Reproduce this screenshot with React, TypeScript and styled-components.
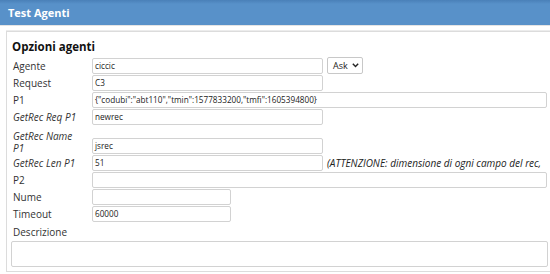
import React from "react";
import styled, { createGlobalStyle } from "styled-components";

const Global = createGlobalStyle`
  html, body { margin: 0; padding: 0; background: #fff; overflow: hidden; }
  body { font-family: "Open Sans", "DejaVu Sans", sans-serif; color: #333; }
`;

const Header = styled.div`
  height: 25px;
  background: linear-gradient(#4a80b8 0px, #5891c9 4px, #5891c9 100%);
  color: #fff;
  font-weight: bold;
  font-size: 11px;
  display: flex;
  align-items: center;
  padding-left: 8px;
  border-bottom: 1px solid #e4e4e4;
`;

const Page = styled.div`
  padding: 5px 0 0 6px;
  width: 600px;
`;

const Panel = styled.div`
  border: 1px solid #dcdcdc;
  box-shadow: 0 -1px 0 #ececec;
  background: #fff;
  padding: 7px 0 4px 4px;
`;

const Title = styled.div`
  font-weight: bold;
  font-size: 11.5px;
  color: #111;
  margin-bottom: 3px;
  padding-left: 1px;
`;

const Form = styled.div`
  display: grid;
  grid-template-columns: 81px auto;
  row-gap: 1px;
  align-items: center;
`;

const Label = styled.div<{ $italic?: boolean; $tall?: boolean }>`
  font-size: 10px;
  line-height: 12px;
  padding-left: 2px;
  font-style: ${(p) => (p.$italic ? "italic" : "normal")};
  align-self: ${(p) => (p.$tall ? "start" : "center")};
  color: #333;
  height: ${(p) => (p.$tall ? "28px" : "auto")};
  padding-top: ${(p) => (p.$tall ? "4px" : "0")};
  box-sizing: border-box;
  white-space: nowrap;
`;

const Field = styled.div<{ $tall?: boolean }>`
  display: flex;
  align-items: center;
  gap: 4px;
  align-self: ${(p) => (p.$tall ? "end" : "center")};
`;

const Input = styled.div<{ $w: number }>`
  box-sizing: border-box;
  width: ${(p) => p.$w}px;
  height: 16px;
  border: 1px solid #d2d2d2;
  border-radius: 2px;
  background: #fff;
  font-size: 8.2px;
  line-height: 14px;
  padding-left: 2px;
  color: #222;
  white-space: nowrap;
  overflow: hidden;
`;

const Select = styled.div`
  box-sizing: border-box;
  width: 36px;
  height: 17px;
  border: 1px solid #c8c8c8;
  border-radius: 2px;
  background: #fff;
  font-size: 9px;
  display: flex;
  align-items: center;
  padding-left: 5px;
  gap: 4px;
  color: #222;
`;

const Note = styled.span`
  font-style: italic;
  font-size: 10px;
  color: #222;
  white-space: nowrap;
`;

const DescLabel = styled.div`
  font-size: 10px;
  padding: 4px 0 3px 2px;
  line-height: 12px;
`;

const TextArea = styled.div`
  box-sizing: border-box;
  height: 26px;
  width: 537px;
  border: 1px solid #d2d2d2;
  border-radius: 2px;
  background: #fff;
`;

const Chevron = () => (
  <svg width="7" height="5" viewBox="0 0 7 5">
    <path d="M0.8 0.8 L3.5 3.6 L6.2 0.8" fill="none" stroke="#222" strokeWidth="1.4" />
  </svg>
);

export default function App() {
  return (
    <>
      <Global />
      <Header>Test Agenti</Header>
      <Page>
        <Panel>
          <Title>Opzioni agenti</Title>
          <Form>
            <Label>Agente</Label>
            <Field>
              <Input $w={231}>ciccic</Input>
              <Select>
                Ask <Chevron />
              </Select>
            </Field>
            <Label>Request</Label>
            <Field>
              <Input $w={231}>C3</Input>
            </Field>
            <Label>P1</Label>
            <Field>
              <Input $w={455}>
                {'{"codubi":"abt110","tmin":1577833200,"tmfi":1605394800}'}
              </Input>
            </Field>
            <Label $italic>GetRec Req P1</Label>
            <Field>
              <Input $w={231}>newrec</Input>
            </Field>
            <Label $italic $tall>
              GetRec Name
              <br />
              P1
            </Label>
            <Field $tall>
              <Input $w={231}>jsrec</Input>
            </Field>
            <Label $italic>GetRec Len P1</Label>
            <Field>
              <Input $w={231}>51</Input>
              <Note>(ATTENZIONE: dimensione di ogni campo del rec,</Note>
            </Field>
            <Label>P2</Label>
            <Field>
              <Input $w={455}></Input>
            </Field>
            <Label>Nume</Label>
            <Field>
              <Input $w={139}></Input>
            </Field>
            <Label>Timeout</Label>
            <Field>
              <Input $w={139}>60000</Input>
            </Field>
          </Form>
          <DescLabel>Descrizione</DescLabel>
          <TextArea />
        </Panel>
      </Page>
    </>
  );
}
